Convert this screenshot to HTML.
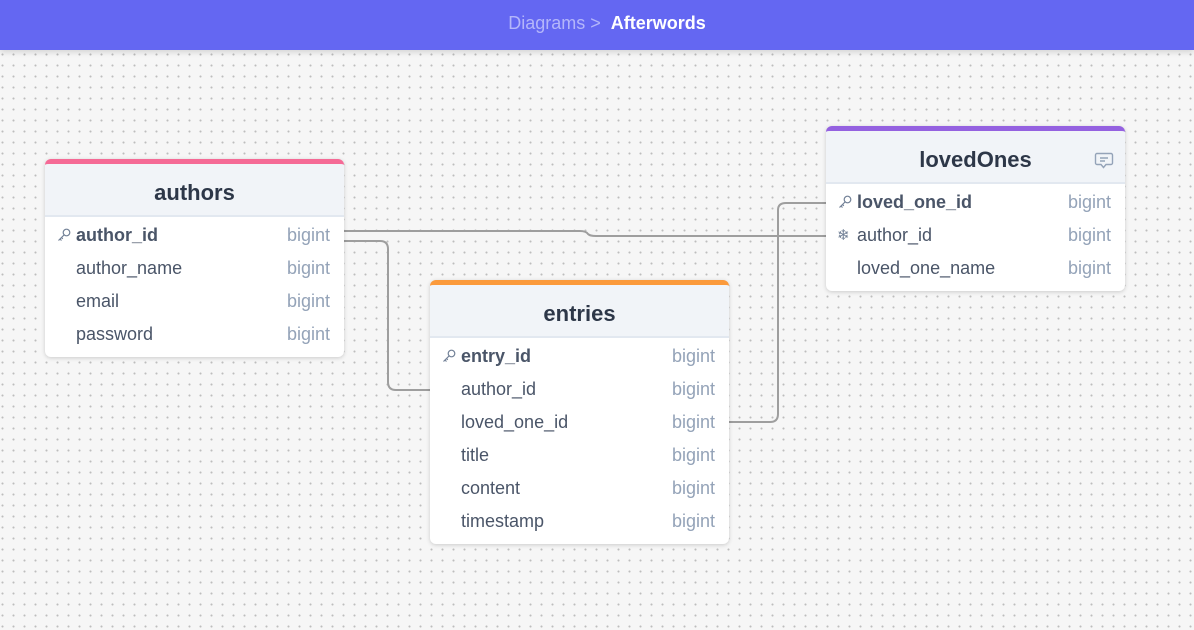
<!DOCTYPE html>
<html><head><meta charset="utf-8"><style>
*{box-sizing:border-box;margin:0;padding:0}
body{width:1194px;height:630px;overflow:hidden;font-family:"Liberation Sans",sans-serif;background-color:#f6f6f6;background-image:radial-gradient(circle,#bdbdbd 0.9px,transparent 1.2px);background-size:11px 11px;background-position:-3px 5px;position:relative}
.top{position:absolute;left:0;top:0;width:1194px;height:50px;background:#6467f2;color:#fff;font-size:18px;text-align:center;line-height:47px;padding-left:20px;box-shadow:0 2px 6px rgba(0,0,0,.15)}
.top span{color:#b4b6fa}
.top b{font-weight:bold}
.t{position:absolute;width:299px;background:#fff;border-radius:6px;box-shadow:0 1px 4px rgba(0,0,0,.18);overflow:hidden;border-top:5px solid}
.h{height:53px;background:#f1f4f8;border-bottom:2px solid #e2e8f0;text-align:center;font-weight:bold;font-size:22px;color:#2d3748;line-height:58px;position:relative}
.r{height:33px;line-height:33px;font-size:18px;color:#4a5568;padding-left:31px;position:relative}
.r b{color:#4a5568}
.r i{font-style:normal;position:absolute;right:14px;color:#94a3b8}
.ic{position:absolute;left:12px;top:9px}
.sf{position:absolute;left:11px;top:0;font-size:15px;color:#718096}
.rows{padding-top:2px;padding-bottom:6px}
</style></head><body>
<div class="top"><span>Diagrams &gt;</span>&nbsp; <b>Afterwords</b></div>
<svg style="position:absolute;left:0;top:0" width="1194" height="630"><g fill="none" stroke="#9e9e9e" stroke-width="2">
<path d="M344 231 H580 Q586 231 588 234 Q590 236 596 236 H826"/>
<path d="M344 241 H380 Q388 241 388 249 V382 Q388 390 396 390 H430"/>
<path d="M729 422 H770 Q778 422 778 414 V210 Q778 203 786 203 H826"/>
</g></svg>
<svg width="0" height="0" style="position:absolute"><defs><symbol id="k" viewBox="0 0 14 14"><g fill="none" stroke="#718096" stroke-width="1.2"><circle cx="9.5" cy="4.5" r="3.3"/><path d="M7 7L1.5 12.5M3 11l1.5 1.5M4.5 9.5l1.3 1.3"/></g></symbol></defs></svg>
<div class="t" style="left:45px;top:159px;border-color:#f56a96"><div class="h">authors</div><div class="rows">
<div class="r"><svg class="ic" width="14" height="14"><use href="#k"/></svg><b>author_id</b><i>bigint</i></div>
<div class="r">author_name<i>bigint</i></div>
<div class="r">email<i>bigint</i></div>
<div class="r">password<i>bigint</i></div></div></div>
<div class="t" style="left:430px;top:280px;border-color:#fb9a3c"><div class="h">entries</div><div class="rows">
<div class="r"><svg class="ic" width="14" height="14"><use href="#k"/></svg><b>entry_id</b><i>bigint</i></div>
<div class="r">author_id<i>bigint</i></div>
<div class="r">loved_one_id<i>bigint</i></div>
<div class="r">title<i>bigint</i></div>
<div class="r">content<i>bigint</i></div>
<div class="r">timestamp<i>bigint</i></div></div></div>
<div class="t" style="left:826px;top:126px;border-color:#9461e0"><div class="h">lovedOnes<svg style="position:absolute;right:11px;top:21px" width="20" height="18" viewBox="0 0 20 18"><path d="M3 1.5h14a1.5 1.5 0 0 1 1.5 1.5v8a1.5 1.5 0 0 1-1.5 1.5h-5l-2.5 3-2.5-3H3A1.5 1.5 0 0 1 1.5 11V3A1.5 1.5 0 0 1 3 1.5zM6 6h8M6 9h5" fill="none" stroke="#94a3b8" stroke-width="1.4"/></svg></div><div class="rows">
<div class="r"><svg class="ic" width="14" height="14"><use href="#k"/></svg><b>loved_one_id</b><i>bigint</i></div>
<div class="r"><span class="sf">❄</span>author_id<i>bigint</i></div>
<div class="r">loved_one_name<i>bigint</i></div></div></div>
</body></html>
